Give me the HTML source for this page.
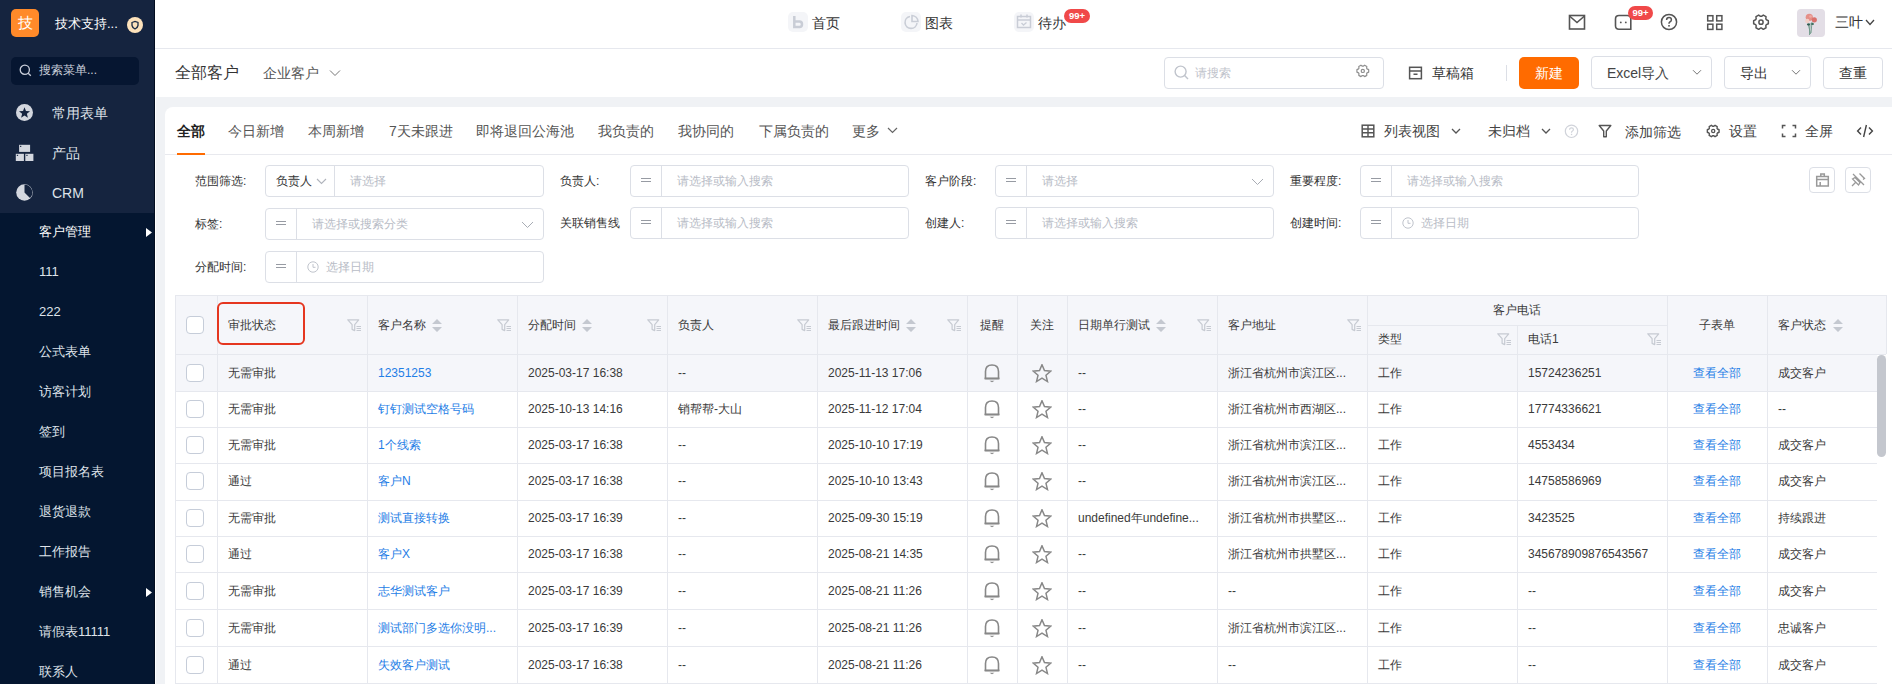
<!DOCTYPE html><html><head><meta charset="utf-8"><style>
*{box-sizing:border-box;margin:0;padding:0}
html,body{width:1892px;height:684px;overflow:hidden}
body{font-family:"Liberation Sans", sans-serif;background:#f0f2f5;position:relative;color:#333;-webkit-font-smoothing:antialiased}
.abs{position:absolute}
.t{position:absolute;white-space:nowrap;line-height:1}
#side{position:absolute;left:0;top:0;width:155px;height:684px;background:#15243f}
#sub{position:absolute;left:0;top:213px;width:155px;height:471px;background:#041630}
.mi{position:absolute;left:39px;font-size:13px;color:#dfe3ea;line-height:20px;white-space:nowrap}
.mt{font-size:14px}
#hdr{position:absolute;left:155px;top:0;width:1737px;height:49px;background:#fff;border-bottom:1px solid #e6e8ee}
#ttl{position:absolute;left:155px;top:49px;width:1737px;height:48px;background:#fff}
#card{position:absolute;left:165px;top:107px;width:1727px;height:577px;background:#fff;border-top-left-radius:8px}
.btn{position:absolute;top:57px;height:32px;border:1px solid #dcdfe6;border-radius:4px;background:#fff}
.ib{position:absolute;border:1px solid #dcdfe6;border-radius:4px;background:#fff}
.lbl{position:absolute;font-size:12px;color:#333;line-height:16px;white-space:nowrap}
.ph{position:absolute;font-size:12px;color:#b8bcc6;line-height:16px;white-space:nowrap}
.eq{position:absolute;width:10px;height:4px;border-top:1.2px solid #979ba3;border-bottom:1.2px solid #979ba3}
.cell{position:absolute;font-size:12px;color:#3a3a3a;line-height:16px;white-space:nowrap}
.lnk{color:#1f7ee6}
.vl{position:absolute;width:1px;background:#e6e8ee}
.hl{position:absolute;height:1px;background:#e6e8ee}
.cb{position:absolute;width:18px;height:18px;border:1px solid #c6cdd9;border-radius:4px;background:#fff}
</style></head><body><div id="side"></div><div id="sub"></div><div class="abs" style="left:154px;top:0;width:1px;height:684px;background:#020d20"></div><div class="abs" style="left:155px;top:0;width:1px;height:684px;background:#fff"></div><div class="abs" style="left:11px;top:9px;width:28px;height:28px;border-radius:5px;background:#ff8a2a;color:#fff;font-size:15px;line-height:28px;text-align:center">技</div><div class="t" style="left:55px;top:17px;font-size:13px;color:#fff;line-height:13px">技术支持...</div><div class="abs" style="left:127px;top:17px;width:16px;height:16px;border-radius:50%;background:#fde2bb"><svg width="16" height="16" viewBox="0 0 16 16" style="position:absolute;left:0;top:0"><path d="M5 5.5 L8 4.5 L11 5.5 L11 8.5 Q10.5 11 8 12 Q5.5 11 5 8.5 Z" fill="none" stroke="#1b2b44" stroke-width="1.3"/></svg></div><div class="abs" style="left:11px;top:57px;width:128px;height:28px;border-radius:5px;background:#061631"></div><svg class="abs" style="left:19px;top:64px" width="13" height="13" viewBox="0 0 13 13"><circle cx="5.8" cy="5.8" r="4.6" fill="none" stroke="#c9ceda" stroke-width="1.3"/><path d="M9.2 9.2 L11.8 11.8" stroke="#c9ceda" stroke-width="1.3"/></svg><div class="t" style="left:39px;top:64px;font-size:12px;color:#c9ceda;line-height:12px">搜索菜单...</div><svg class="abs" style="left:16px;top:104px" width="18" height="18" viewBox="0 0 18 18"><circle cx="8.5" cy="8.5" r="8.5" fill="#d3d7df"/><path d="M8.50 3.20 L9.97 6.98 L14.02 7.21 L10.88 9.77 L11.91 13.69 L8.50 11.50 L5.09 13.69 L6.12 9.77 L2.98 7.21 L7.03 6.98 Z" fill="#15243f"/></svg><div class="mi mt" style="left:52px;top:103px">常用表单</div><svg class="abs" style="left:15px;top:144px" width="20" height="18" viewBox="0 0 20 18"><rect x="4.1" y="0.8" width="11" height="7.1" fill="#d3d7df"/><rect x="0.8" y="9.8" width="8.1" height="7.2" fill="#d3d7df"/><rect x="10.3" y="9.8" width="8.1" height="7.2" fill="#d3d7df"/><rect x="5" y="1.8" width="1.3" height="1.1" fill="#15243f"/><rect x="1.8" y="10.8" width="1.3" height="1.1" fill="#15243f"/><rect x="11.3" y="10.8" width="1.3" height="1.1" fill="#15243f"/></svg><div class="mi mt" style="left:52px;top:143px">产品</div><svg class="abs" style="left:16px;top:184px" width="18" height="18" viewBox="0 0 18 18"><circle cx="8.5" cy="8.5" r="8.3" fill="#d3d7df"/><path d="M8.5 8.5 L8.5 0.8 A7.7 7.7 0 0 1 14 14 Z" fill="#15243f"/><path d="M8.5 1.5 L8.5 8.5 L13.4 13.4" fill="none" stroke="#d3d7df" stroke-width="0"/></svg><div class="mi mt" style="left:52px;top:183px">CRM</div><div class="mi" style="top:222px;font-weight:500;color:#fff">客户管理</div><svg class="abs" style="left:146px;top:228px" width="7" height="9" viewBox="0 0 7 9"><path d="M0 0 L6 4.5 L0 9 Z" fill="#fff"/></svg><div class="mi" style="top:262px;">111</div><div class="mi" style="top:302px;">222</div><div class="mi" style="top:342px;">公式表单</div><div class="mi" style="top:382px;">访客计划</div><div class="mi" style="top:422px;">签到</div><div class="mi" style="top:462px;">项目报名表</div><div class="mi" style="top:502px;">退货退款</div><div class="mi" style="top:542px;">工作报告</div><div class="mi" style="top:582px;">销售机会</div><svg class="abs" style="left:146px;top:588px" width="7" height="9" viewBox="0 0 7 9"><path d="M0 0 L6 4.5 L0 9 Z" fill="#fff"/></svg><div class="mi" style="top:622px;">请假表11111</div><div class="mi" style="top:662px;">联系人</div><div id="hdr"></div><div class="abs" style="left:788px;top:12px;width:20px;height:20px;border-radius:5px;background:#f4f5f8"></div><svg class="abs" style="left:788px;top:12px" width="20" height="20" viewBox="0 0 20 20"><path d="M6.3 4 L6.3 15 L11.5 15 Q14 15 14 12.25 Q14 9.5 11.5 9.5 L7 9.5" fill="none" stroke="#c9cdd6" stroke-width="2.5"/></svg><div class="t" style="left:812px;top:16px;font-size:14px;color:#333;line-height:14px">首页</div><div class="abs" style="left:901px;top:12px;width:20px;height:20px;border-radius:5px;background:#f4f5f8"></div><svg class="abs" style="left:901px;top:12px" width="20" height="20" viewBox="0 0 20 20"><path d="M9 4.5 A6 6 0 1 0 16 11" fill="none" stroke="#c9cdd6" stroke-width="1.6"/><path d="M11 3.5 L11 9.5 L17 9.5 A6.5 6.5 0 0 0 11 3.5 Z" fill="none" stroke="#c9cdd6" stroke-width="1.6"/></svg><div class="t" style="left:925px;top:16px;font-size:14px;color:#333;line-height:14px">图表</div><div class="abs" style="left:1014px;top:12px;width:20px;height:20px;border-radius:5px;background:#f4f5f8"></div><svg class="abs" style="left:1014px;top:12px" width="20" height="20" viewBox="0 0 20 20"><rect x="3.5" y="4.5" width="13" height="11" fill="none" stroke="#c9cdd6" stroke-width="1.5"/><path d="M3.5 8 L16.5 8 M7 2.5 L7 5.5 M13 2.5 L13 5.5" stroke="#c9cdd6" stroke-width="1.5"/><path d="M7.5 11 L9.5 13 L12.5 10.5" fill="none" stroke="#c9cdd6" stroke-width="1.3"/></svg><div class="t" style="left:1038px;top:16px;font-size:14px;color:#333;line-height:14px">待办</div><div class="abs" style="left:1064px;top:9px;width:26px;height:14px;border-radius:7px;background:#f04949;color:#fff;font-size:9.5px;line-height:14px;text-align:center;font-weight:bold">99+</div><svg class="abs" style="left:1568px;top:14px" width="18" height="17" viewBox="0 0 18 17"><rect x="1.5" y="1.5" width="15" height="13.5" fill="none" stroke="#555" stroke-width="1.6"/><path d="M1.5 2 L9 8.5 L16.5 2" fill="none" stroke="#555" stroke-width="1.6"/></svg><svg class="abs" style="left:1614px;top:14px" width="19" height="17" viewBox="0 0 19 17"><path d="M16.8 15.2 L5 15.2 Q1.5 15.2 1.5 11.7 L1.5 5 Q1.5 1.5 5 1.5 L13.3 1.5 Q16.8 1.5 16.8 5 Z" fill="none" stroke="#555" stroke-width="1.6"/><circle cx="6.8" cy="8.4" r="0.9" fill="#555"/><circle cx="11.8" cy="8.4" r="0.9" fill="#555"/></svg><div class="abs" style="left:1628px;top:6px;width:25px;height:14px;border-radius:7px;background:#f04949;color:#fff;font-size:9.5px;line-height:14px;text-align:center;font-weight:bold">99+</div><svg class="abs" style="left:1660px;top:13px" width="18" height="18" viewBox="0 0 18 18"><circle cx="9" cy="9" r="7.6" fill="none" stroke="#555" stroke-width="1.5"/><path d="M6.6 7 Q6.6 4.6 9 4.6 Q11.4 4.6 11.4 6.8 Q11.4 8.3 9.8 9 Q9 9.4 9 10.8" fill="none" stroke="#555" stroke-width="1.5"/><rect x="8.2" y="12" width="1.6" height="1.6" fill="#555"/></svg><svg class="abs" style="left:1706px;top:14px" width="18" height="17" viewBox="0 0 18 17"><rect x="1.7" y="1.7" width="5.2" height="5.2" fill="none" stroke="#555" stroke-width="1.5"/><rect x="10.7" y="1.7" width="5.2" height="5.2" fill="none" stroke="#555" stroke-width="1.5"/><rect x="1.7" y="10.2" width="5.2" height="5.2" fill="none" stroke="#555" stroke-width="1.5"/><rect x="10.7" y="10.2" width="5.2" height="5.2" fill="none" stroke="#555" stroke-width="1.5"/></svg><svg class="abs" style="left:1751px;top:12px" width="20" height="20" viewBox="0 0 20 20"><path d="M15.35 7.71 L17.34 8.64 L17.34 11.76 L15.35 12.69 L14.83 13.58 L15.02 15.77 L12.32 17.33 L10.51 16.08 L9.49 16.08 L7.68 17.33 L4.98 15.77 L5.17 13.58 L4.65 12.69 L2.66 11.76 L2.66 8.64 L4.65 7.71 L5.17 6.82 L4.98 4.63 L7.68 3.07 L9.49 4.32 L10.51 4.32 L12.32 3.07 L15.02 4.63 L14.83 6.82 Z" fill="none" stroke="#555" stroke-width="1.5" stroke-linejoin="round"/><circle cx="10" cy="10.2" r="2.1" fill="none" stroke="#555" stroke-width="1.5"/></svg><div class="abs" style="left:1797px;top:9px;width:28px;height:28px;border-radius:4px;background:#e3dee6"></div><svg class="abs" style="left:1797px;top:9px" width="28" height="28" viewBox="0 0 28 28"><path d="M13 14 L12.5 26 M15 13 L14 24 M11 14 L13.5 25" stroke="#6b9686" stroke-width="0.9" fill="none"/><ellipse cx="11.5" cy="15.5" rx="1.6" ry="1.1" fill="#2e5a50"/><ellipse cx="15.5" cy="15" rx="1.5" ry="1" fill="#3b6a5c"/><circle cx="12.3" cy="8.3" r="3.6" fill="#e58f88"/><circle cx="17.3" cy="10.8" r="2.6" fill="#d9706b"/><circle cx="10.3" cy="12" r="2.2" fill="#f2cfc8"/><circle cx="13.5" cy="7.5" r="1.3" fill="#f0aaa2"/></svg><div class="t" style="left:1835px;top:15px;font-size:14px;color:#333;line-height:14px">三叶</div><svg class="abs" style="left:1865px;top:19px" width="10" height="7" viewBox="0 0 10 7"><path d="M1 1 L5 5.5 L9 1" fill="none" stroke="#444" stroke-width="1.3"/></svg><div id="ttl"></div><div class="t" style="left:175px;top:65px;font-size:16px;color:#333;line-height:16px">全部客户</div><div class="t" style="left:263px;top:66px;font-size:14px;color:#555;line-height:14px">企业客户</div><svg class="abs" style="left:329px;top:69px" width="12" height="8" viewBox="0 0 12 8"><path d="M1 1.5 L6 6.5 L11 1.5" fill="none" stroke="#777" stroke-width="1"/></svg><div class="btn" style="left:1164px;width:220px"></div><svg class="abs" style="left:1174px;top:65px" width="16" height="16" viewBox="0 0 16 16"><circle cx="6.6" cy="6.6" r="5.5" fill="none" stroke="#c0c4cc" stroke-width="1.4"/><path d="M10.6 10.6 L14 14" stroke="#c0c4cc" stroke-width="1.4"/></svg><div class="t" style="left:1195px;top:67px;font-size:12px;color:#bfc3cb;line-height:12px">请搜索</div><svg class="abs" style="left:1355px;top:63px" width="16" height="16" viewBox="0 0 16 16"><path d="M12.06 5.91 L13.67 6.65 L13.67 9.15 L12.06 9.89 L11.65 10.60 L11.81 12.36 L9.65 13.61 L8.21 12.58 L7.39 12.58 L5.95 13.61 L3.79 12.36 L3.95 10.60 L3.54 9.89 L1.93 9.15 L1.93 6.65 L3.54 5.91 L3.95 5.20 L3.79 3.44 L5.95 2.19 L7.39 3.22 L8.21 3.22 L9.65 2.19 L11.81 3.44 L11.65 5.20 Z" fill="none" stroke="#8f8f8f" stroke-width="1.2" stroke-linejoin="round"/><circle cx="7.8" cy="7.9" r="1.6" fill="none" stroke="#8f8f8f" stroke-width="1.2"/></svg><svg class="abs" style="left:1408px;top:66px" width="15" height="14" viewBox="0 0 15 14"><rect x="1.6" y="1.3" width="11.8" height="11.4" fill="none" stroke="#555" stroke-width="1.5"/><path d="M1.6 5 L13.4 5 M5.5 8.3 L9.5 8.3" stroke="#555" stroke-width="1.5"/></svg><div class="t" style="left:1432px;top:66px;font-size:14px;color:#333;line-height:14px">草稿箱</div><div class="abs" style="left:1506px;top:65px;width:1px;height:16px;background:#dcdfe6"></div><div class="abs" style="left:1519px;top:57px;width:60px;height:32px;border-radius:5px;background:#ff6b00;color:#fff;font-size:14px;line-height:32px;text-align:center">新建</div><div class="btn" style="left:1591px;width:121px;top:56px;height:33px"></div><div class="t" style="left:1607px;top:66px;font-size:14px;color:#444;line-height:14px">Excel导入</div><svg class="abs" style="left:1692px;top:69px" width="10" height="7" viewBox="0 0 10 7"><path d="M1 1.2 L5 5.2 L9 1.2" fill="none" stroke="#777" stroke-width="1"/></svg><div class="btn" style="left:1724px;width:87px;top:56px;height:33px"></div><div class="t" style="left:1740px;top:66px;font-size:14px;color:#333;line-height:14px">导出</div><svg class="abs" style="left:1791px;top:69px" width="10" height="7" viewBox="0 0 10 7"><path d="M1 1.2 L5 5.2 L9 1.2" fill="none" stroke="#777" stroke-width="1"/></svg><div class="btn" style="left:1823px;width:60px"></div><div class="t" style="left:1839px;top:66px;font-size:14px;color:#333;line-height:14px">查重</div><div id="card"></div><div class="t" style="left:177px;top:124px;font-size:14px;line-height:14px;font-weight:bold;color:#222">全部</div><div class="t" style="left:228px;top:124px;font-size:14px;line-height:14px;color:#555">今日新增</div><div class="t" style="left:308px;top:124px;font-size:14px;line-height:14px;color:#555">本周新增</div><div class="t" style="left:389px;top:124px;font-size:14px;line-height:14px;color:#555">7天未跟进</div><div class="t" style="left:476px;top:124px;font-size:14px;line-height:14px;color:#555">即将退回公海池</div><div class="t" style="left:598px;top:124px;font-size:14px;line-height:14px;color:#555">我负责的</div><div class="t" style="left:678px;top:124px;font-size:14px;line-height:14px;color:#555">我协同的</div><div class="t" style="left:759px;top:124px;font-size:14px;line-height:14px;color:#555">下属负责的</div><div class="t" style="left:852px;top:124px;font-size:14px;line-height:14px;color:#555">更多</div><svg class="abs" style="left:887px;top:127px" width="11" height="7" viewBox="0 0 11 7"><path d="M1 1 L5.5 5.5 L10 1" fill="none" stroke="#666" stroke-width="1.2"/></svg><div class="hl" style="left:165px;top:154px;width:1727px;background:#e8e9ee"></div><div class="abs" style="left:177px;top:153px;width:28px;height:2px;background:#ff6b00"></div><svg class="abs" style="left:1361px;top:124px" width="14" height="14" viewBox="0 0 14 14"><rect x="1.2" y="1.2" width="11.6" height="11.6" fill="none" stroke="#555" stroke-width="1.5"/><path d="M1 5 L13 5 M1 8.8 L13 8.8 M7 1 L7 13" stroke="#555" stroke-width="1.4"/></svg><div class="t" style="left:1384px;top:124px;font-size:14px;color:#444;line-height:14px">列表视图</div><svg class="abs" style="left:1451px;top:128px" width="10" height="7" viewBox="0 0 10 7"><path d="M1 1 L5 5 L9 1" fill="none" stroke="#555" stroke-width="1.3"/></svg><div class="t" style="left:1488px;top:124px;font-size:14px;color:#444;line-height:14px">未归档</div><svg class="abs" style="left:1541px;top:128px" width="10" height="7" viewBox="0 0 10 7"><path d="M1 1 L5 5 L9 1" fill="none" stroke="#555" stroke-width="1.3"/></svg><svg class="abs" style="left:1564px;top:124px" width="15" height="15" viewBox="0 0 15 15"><circle cx="7.5" cy="7.3" r="6.2" fill="none" stroke="#d0d3da" stroke-width="1.2"/><path d="M5.6 5.8 Q5.6 3.9 7.5 3.9 Q9.4 3.9 9.4 5.6 Q9.4 6.8 8.2 7.3 Q7.5 7.7 7.5 8.8" fill="none" stroke="#d0d3da" stroke-width="1.2"/><rect x="6.9" y="9.8" width="1.3" height="1.3" fill="#d0d3da"/></svg><svg class="abs" style="left:1598px;top:124px" width="14" height="14" viewBox="0 0 14 14"><path d="M1.2 1.5 L12.8 1.5 L8.3 7 L8.3 12.8 L5.7 12.8 L5.7 7 Z" fill="none" stroke="#555" stroke-width="1.4" stroke-linejoin="round"/></svg><div class="t" style="left:1625px;top:125px;font-size:14px;color:#444;line-height:14px">添加筛选</div><svg class="abs" style="left:1705px;top:123px" width="16" height="16" viewBox="0 0 16 16"><path d="M12.46 6.01 L14.07 6.75 L14.07 9.25 L12.46 9.99 L12.05 10.70 L12.21 12.46 L10.05 13.71 L8.61 12.68 L7.79 12.68 L6.35 13.71 L4.19 12.46 L4.35 10.70 L3.94 9.99 L2.33 9.25 L2.33 6.75 L3.94 6.01 L4.35 5.30 L4.19 3.54 L6.35 2.29 L7.79 3.32 L8.61 3.32 L10.05 2.29 L12.21 3.54 L12.05 5.30 Z" fill="none" stroke="#555" stroke-width="1.4" stroke-linejoin="round"/><circle cx="8.2" cy="8" r="1.6" fill="none" stroke="#555" stroke-width="1.3"/></svg><div class="t" style="left:1729px;top:124px;font-size:14px;color:#444;line-height:14px">设置</div><svg class="abs" style="left:1781px;top:124px" width="16" height="14" viewBox="0 0 16 14"><path d="M1.5 4.5 L1.5 1.5 L4.5 1.5 M11.5 1.5 L14.5 1.5 L14.5 4.5 M14.5 9.5 L14.5 12.5 L11.5 12.5 M4.5 12.5 L1.5 12.5 L1.5 9.5" fill="none" stroke="#555" stroke-width="1.5"/></svg><div class="t" style="left:1805px;top:124px;font-size:14px;color:#444;line-height:14px">全屏</div><svg class="abs" style="left:1856px;top:124px" width="18" height="14" viewBox="0 0 18 14"><path d="M5 3.5 L1.6 7 L5 10.5 M13 3.5 L16.4 7 L13 10.5 M10.4 1 L7.6 13" fill="none" stroke="#444" stroke-width="1.4"/></svg><div class="lbl" style="left:195px;top:173px">范围筛选:</div><div class="ib" style="left:265px;top:165px;width:279px;height:32px"></div><div class="abs" style="left:334px;top:165px;width:1px;height:32px;background:#dcdfe6"></div><div class="lbl" style="left:276px;top:173px">负责人</div><svg class="abs" style="left:316px;top:178px" width="11" height="7" viewBox="0 0 11 7"><path d="M1 1 L5.5 5.5 L10 1" fill="none" stroke="#b0b4bc" stroke-width="1.1"/></svg><div class="ph" style="left:350px;top:173px">请选择</div><div class="lbl" style="left:560px;top:173px">负责人:</div><div class="ib" style="left:630px;top:165px;width:279px;height:32px"></div><div class="abs" style="left:661px;top:165px;width:1px;height:32px;background:#dcdfe6"></div><div class="eq" style="left:641px;top:178px"></div><div class="ph" style="left:677px;top:173px">请选择或输入搜索</div><div class="lbl" style="left:925px;top:173px">客户阶段:</div><div class="ib" style="left:995px;top:165px;width:279px;height:32px"></div><div class="abs" style="left:1026px;top:165px;width:1px;height:32px;background:#dcdfe6"></div><div class="eq" style="left:1006px;top:178px"></div><div class="ph" style="left:1042px;top:173px">请选择</div><svg class="abs" style="left:1251px;top:178px" width="13" height="8" viewBox="0 0 13 8"><path d="M1 1 L6.5 6.5 L12 1" fill="none" stroke="#a8acb4" stroke-width="1"/></svg><div class="lbl" style="left:1290px;top:173px">重要程度:</div><div class="ib" style="left:1360px;top:165px;width:279px;height:32px"></div><div class="abs" style="left:1391px;top:165px;width:1px;height:32px;background:#dcdfe6"></div><div class="eq" style="left:1371px;top:178px"></div><div class="ph" style="left:1407px;top:173px">请选择或输入搜索</div><div class="lbl" style="left:195px;top:216px">标签:</div><div class="ib" style="left:265px;top:208px;width:279px;height:32px"></div><div class="abs" style="left:296px;top:208px;width:1px;height:32px;background:#dcdfe6"></div><div class="eq" style="left:276px;top:221px"></div><div class="ph" style="left:312px;top:216px">请选择或搜索分类</div><svg class="abs" style="left:521px;top:221px" width="13" height="8" viewBox="0 0 13 8"><path d="M1 1 L6.5 6.5 L12 1" fill="none" stroke="#a8acb4" stroke-width="1"/></svg><div class="lbl" style="left:560px;top:215px">关联销售线</div><div class="ib" style="left:630px;top:207px;width:279px;height:32px"></div><div class="abs" style="left:661px;top:207px;width:1px;height:32px;background:#dcdfe6"></div><div class="eq" style="left:641px;top:220px"></div><div class="ph" style="left:677px;top:215px">请选择或输入搜索</div><div class="lbl" style="left:925px;top:215px">创建人:</div><div class="ib" style="left:995px;top:207px;width:279px;height:32px"></div><div class="abs" style="left:1026px;top:207px;width:1px;height:32px;background:#dcdfe6"></div><div class="eq" style="left:1006px;top:220px"></div><div class="ph" style="left:1042px;top:215px">请选择或输入搜索</div><div class="lbl" style="left:1290px;top:215px">创建时间:</div><div class="ib" style="left:1360px;top:207px;width:279px;height:32px"></div><div class="abs" style="left:1391px;top:207px;width:1px;height:32px;background:#dcdfe6"></div><div class="eq" style="left:1371px;top:220px"></div><svg class="abs" style="left:1402px;top:217px" width="12" height="12" viewBox="0 0 12 12"><circle cx="6" cy="6" r="5.2" fill="none" stroke="#c0c4cc" stroke-width="1"/><path d="M6 3 L6 6.3 L8.5 6.3" fill="none" stroke="#c0c4cc" stroke-width="1"/></svg><div class="ph" style="left:1421px;top:215px">选择日期</div><div class="lbl" style="left:195px;top:259px">分配时间:</div><div class="ib" style="left:265px;top:251px;width:279px;height:32px"></div><div class="abs" style="left:296px;top:251px;width:1px;height:32px;background:#dcdfe6"></div><div class="eq" style="left:276px;top:264px"></div><svg class="abs" style="left:307px;top:261px" width="12" height="12" viewBox="0 0 12 12"><circle cx="6" cy="6" r="5.2" fill="none" stroke="#c0c4cc" stroke-width="1"/><path d="M6 3 L6 6.3 L8.5 6.3" fill="none" stroke="#c0c4cc" stroke-width="1"/></svg><div class="ph" style="left:326px;top:259px">选择日期</div><div class="ib" style="left:1809px;top:167px;width:26px;height:26px"></div><svg class="abs" style="left:1809px;top:167px" width="26" height="26" viewBox="0 0 26 26"><path d="M11.8 9.6 L11.8 6.9 L15.3 6.9 L15.3 9.6 M7.7 9.6 L19.3 9.6 L19.3 18.9 L7.7 18.9 Z M7.7 12.6 L19.3 12.6 M11.2 15 L11.2 18.9" fill="none" stroke="#999" stroke-width="1.5"/></svg><div class="ib" style="left:1845px;top:167px;width:26px;height:26px"></div><svg class="abs" style="left:1845px;top:167px" width="26" height="26" viewBox="0 0 26 26"><path d="M8 7 L19 18 M14.5 6.5 L19.5 11.5 L18 12.5 M7.5 12 L10 10.5 L15 15.5 L13.5 18 Z M7 19 L10.5 15.5" fill="none" stroke="#999" stroke-width="1.3"/></svg><div class="abs" style="left:175px;top:295px;width:1711px;height:59px;background:#f5f6fa"></div><div class="abs" style="left:175px;top:354px;width:1702px;height:37px;background:#f5f6fa"></div><div class="hl" style="left:175px;top:295px;width:1711px"></div><div class="hl" style="left:1367px;top:325px;width:300px"></div><div class="hl" style="left:175px;top:354px;width:1711px"></div><div class="hl" style="left:175px;top:391px;width:1702px"></div><div class="hl" style="left:175px;top:427px;width:1702px"></div><div class="hl" style="left:175px;top:463px;width:1702px"></div><div class="hl" style="left:175px;top:500px;width:1702px"></div><div class="hl" style="left:175px;top:536px;width:1702px"></div><div class="hl" style="left:175px;top:572px;width:1702px"></div><div class="hl" style="left:175px;top:609px;width:1702px"></div><div class="hl" style="left:175px;top:646px;width:1702px"></div><div class="hl" style="left:175px;top:683px;width:1702px"></div><div class="vl" style="left:175px;top:295px;height:389px"></div><div class="vl" style="left:217px;top:295px;height:389px"></div><div class="vl" style="left:367px;top:295px;height:389px"></div><div class="vl" style="left:517px;top:295px;height:389px"></div><div class="vl" style="left:667px;top:295px;height:389px"></div><div class="vl" style="left:817px;top:295px;height:389px"></div><div class="vl" style="left:967px;top:295px;height:389px"></div><div class="vl" style="left:1017px;top:295px;height:389px"></div><div class="vl" style="left:1067px;top:295px;height:389px"></div><div class="vl" style="left:1217px;top:295px;height:389px"></div><div class="vl" style="left:1367px;top:295px;height:389px"></div><div class="vl" style="left:1517px;top:325px;height:359px"></div><div class="vl" style="left:1667px;top:295px;height:389px"></div><div class="vl" style="left:1767px;top:295px;height:389px"></div><div class="vl" style="left:1886px;top:295px;height:59px"></div><div class="cb" style="left:186px;top:316px"></div><div class="cell" style="left:228px;top:317px">审批状态</div><svg class="abs" style="left:347px;top:319px" width="15" height="13" viewBox="0 0 15 13"><path d="M0.8 0.8 L11.7 0.8 L7.7 5.6 L7.7 11.6 L5.1 10.4 L5.1 5.6 Z" fill="none" stroke="#c6cad2" stroke-width="1.2" stroke-linejoin="round"/><path d="M9.5 7.5 L14 7.5 M9.5 9.5 L14 9.5 M9.5 11.5 L14 11.5" stroke="#c6cad2" stroke-width="1"/></svg><div class="cell" style="left:378px;top:317px">客户名称</div><svg class="abs" style="left:432px;top:319px" width="10" height="13" viewBox="0 0 10 13"><path d="M5 0 L10 5 L0 5 Z M0 8 L10 8 L5 13 Z" fill="#c4c8d0"/></svg><svg class="abs" style="left:497px;top:319px" width="15" height="13" viewBox="0 0 15 13"><path d="M0.8 0.8 L11.7 0.8 L7.7 5.6 L7.7 11.6 L5.1 10.4 L5.1 5.6 Z" fill="none" stroke="#c6cad2" stroke-width="1.2" stroke-linejoin="round"/><path d="M9.5 7.5 L14 7.5 M9.5 9.5 L14 9.5 M9.5 11.5 L14 11.5" stroke="#c6cad2" stroke-width="1"/></svg><div class="cell" style="left:528px;top:317px">分配时间</div><svg class="abs" style="left:582px;top:319px" width="10" height="13" viewBox="0 0 10 13"><path d="M5 0 L10 5 L0 5 Z M0 8 L10 8 L5 13 Z" fill="#c4c8d0"/></svg><svg class="abs" style="left:647px;top:319px" width="15" height="13" viewBox="0 0 15 13"><path d="M0.8 0.8 L11.7 0.8 L7.7 5.6 L7.7 11.6 L5.1 10.4 L5.1 5.6 Z" fill="none" stroke="#c6cad2" stroke-width="1.2" stroke-linejoin="round"/><path d="M9.5 7.5 L14 7.5 M9.5 9.5 L14 9.5 M9.5 11.5 L14 11.5" stroke="#c6cad2" stroke-width="1"/></svg><div class="cell" style="left:678px;top:317px">负责人</div><svg class="abs" style="left:797px;top:319px" width="15" height="13" viewBox="0 0 15 13"><path d="M0.8 0.8 L11.7 0.8 L7.7 5.6 L7.7 11.6 L5.1 10.4 L5.1 5.6 Z" fill="none" stroke="#c6cad2" stroke-width="1.2" stroke-linejoin="round"/><path d="M9.5 7.5 L14 7.5 M9.5 9.5 L14 9.5 M9.5 11.5 L14 11.5" stroke="#c6cad2" stroke-width="1"/></svg><div class="cell" style="left:828px;top:317px">最后跟进时间</div><svg class="abs" style="left:906px;top:319px" width="10" height="13" viewBox="0 0 10 13"><path d="M5 0 L10 5 L0 5 Z M0 8 L10 8 L5 13 Z" fill="#c4c8d0"/></svg><svg class="abs" style="left:947px;top:319px" width="15" height="13" viewBox="0 0 15 13"><path d="M0.8 0.8 L11.7 0.8 L7.7 5.6 L7.7 11.6 L5.1 10.4 L5.1 5.6 Z" fill="none" stroke="#c6cad2" stroke-width="1.2" stroke-linejoin="round"/><path d="M9.5 7.5 L14 7.5 M9.5 9.5 L14 9.5 M9.5 11.5 L14 11.5" stroke="#c6cad2" stroke-width="1"/></svg><div class="cell" style="left:1078px;top:317px">日期单行测试</div><svg class="abs" style="left:1156px;top:319px" width="10" height="13" viewBox="0 0 10 13"><path d="M5 0 L10 5 L0 5 Z M0 8 L10 8 L5 13 Z" fill="#c4c8d0"/></svg><svg class="abs" style="left:1197px;top:319px" width="15" height="13" viewBox="0 0 15 13"><path d="M0.8 0.8 L11.7 0.8 L7.7 5.6 L7.7 11.6 L5.1 10.4 L5.1 5.6 Z" fill="none" stroke="#c6cad2" stroke-width="1.2" stroke-linejoin="round"/><path d="M9.5 7.5 L14 7.5 M9.5 9.5 L14 9.5 M9.5 11.5 L14 11.5" stroke="#c6cad2" stroke-width="1"/></svg><div class="cell" style="left:1228px;top:317px">客户地址</div><svg class="abs" style="left:1347px;top:319px" width="15" height="13" viewBox="0 0 15 13"><path d="M0.8 0.8 L11.7 0.8 L7.7 5.6 L7.7 11.6 L5.1 10.4 L5.1 5.6 Z" fill="none" stroke="#c6cad2" stroke-width="1.2" stroke-linejoin="round"/><path d="M9.5 7.5 L14 7.5 M9.5 9.5 L14 9.5 M9.5 11.5 L14 11.5" stroke="#c6cad2" stroke-width="1"/></svg><div class="cell" style="left:980px;top:317px">提醒</div><div class="cell" style="left:1030px;top:317px">关注</div><div class="cell" style="left:1493px;top:302px">客户电话</div><div class="cell" style="left:1378px;top:331px">类型</div><svg class="abs" style="left:1497px;top:333px" width="15" height="13" viewBox="0 0 15 13"><path d="M0.8 0.8 L11.7 0.8 L7.7 5.6 L7.7 11.6 L5.1 10.4 L5.1 5.6 Z" fill="none" stroke="#c6cad2" stroke-width="1.2" stroke-linejoin="round"/><path d="M9.5 7.5 L14 7.5 M9.5 9.5 L14 9.5 M9.5 11.5 L14 11.5" stroke="#c6cad2" stroke-width="1"/></svg><div class="cell" style="left:1528px;top:331px">电话1</div><svg class="abs" style="left:1647px;top:333px" width="15" height="13" viewBox="0 0 15 13"><path d="M0.8 0.8 L11.7 0.8 L7.7 5.6 L7.7 11.6 L5.1 10.4 L5.1 5.6 Z" fill="none" stroke="#c6cad2" stroke-width="1.2" stroke-linejoin="round"/><path d="M9.5 7.5 L14 7.5 M9.5 9.5 L14 9.5 M9.5 11.5 L14 11.5" stroke="#c6cad2" stroke-width="1"/></svg><div class="cell" style="left:1699px;top:317px">子表单</div><div class="cell" style="left:1778px;top:317px">客户状态</div><svg class="abs" style="left:1833px;top:319px" width="10" height="13" viewBox="0 0 10 13"><path d="M5 0 L10 5 L0 5 Z M0 8 L10 8 L5 13 Z" fill="#c4c8d0"/></svg><div class="abs" style="left:217px;top:302px;width:88px;height:43px;border:2px solid #e5361f;border-radius:6px"></div><div class="cb" style="left:186px;top:364px"></div><div class="cell " style="left:228px;top:365px">无需审批</div><div class="cell lnk" style="left:378px;top:365px">12351253</div><div class="cell " style="left:528px;top:365px">2025-03-17 16:38</div><div class="cell " style="left:678px;top:365px">--</div><div class="cell " style="left:828px;top:365px">2025-11-13 17:06</div><div class="cell " style="left:1078px;top:365px">--</div><div class="cell " style="left:1228px;top:365px">浙江省杭州市滨江区...</div><div class="cell " style="left:1378px;top:365px">工作</div><div class="cell " style="left:1528px;top:365px">15724236251</div><div class="cell lnk" style="left:1693px;top:365px">查看全部</div><div class="cell " style="left:1778px;top:365px">成交客户</div><svg class="abs" style="left:984px;top:364px" width="16" height="19" viewBox="0 0 16 19"><path d="M1.5 14.5 L1.5 7.5 Q1.5 1 8 1 Q14.5 1 14.5 7.5 L14.5 14.5 Z" fill="none" stroke="#888" stroke-width="1.6" stroke-linejoin="round"/><path d="M0.5 14.5 L15.5 14.5" stroke="#888" stroke-width="1.8"/><path d="M5.5 16.8 L10.5 16.8 L8 18.2 Z" fill="#888"/></svg><svg class="abs" style="left:1032px;top:364px" width="20" height="19" viewBox="0 0 20 19"><path d="M10.00 0.70 L12.47 6.60 L18.84 7.13 L13.99 11.30 L15.47 17.52 L10.00 14.20 L4.53 17.52 L6.01 11.30 L1.16 7.13 L7.53 6.60 Z" fill="none" stroke="#888" stroke-width="1.5" stroke-linejoin="miter"/></svg><div class="cb" style="left:186px;top:400px"></div><div class="cell " style="left:228px;top:401px">无需审批</div><div class="cell lnk" style="left:378px;top:401px">钉钉测试空格号码</div><div class="cell " style="left:528px;top:401px">2025-10-13 14:16</div><div class="cell " style="left:678px;top:401px">销帮帮-大山</div><div class="cell " style="left:828px;top:401px">2025-11-12 17:04</div><div class="cell " style="left:1078px;top:401px">--</div><div class="cell " style="left:1228px;top:401px">浙江省杭州市西湖区...</div><div class="cell " style="left:1378px;top:401px">工作</div><div class="cell " style="left:1528px;top:401px">17774336621</div><div class="cell lnk" style="left:1693px;top:401px">查看全部</div><div class="cell " style="left:1778px;top:401px">--</div><svg class="abs" style="left:984px;top:400px" width="16" height="19" viewBox="0 0 16 19"><path d="M1.5 14.5 L1.5 7.5 Q1.5 1 8 1 Q14.5 1 14.5 7.5 L14.5 14.5 Z" fill="none" stroke="#888" stroke-width="1.6" stroke-linejoin="round"/><path d="M0.5 14.5 L15.5 14.5" stroke="#888" stroke-width="1.8"/><path d="M5.5 16.8 L10.5 16.8 L8 18.2 Z" fill="#888"/></svg><svg class="abs" style="left:1032px;top:400px" width="20" height="19" viewBox="0 0 20 19"><path d="M10.00 0.70 L12.47 6.60 L18.84 7.13 L13.99 11.30 L15.47 17.52 L10.00 14.20 L4.53 17.52 L6.01 11.30 L1.16 7.13 L7.53 6.60 Z" fill="none" stroke="#888" stroke-width="1.5" stroke-linejoin="miter"/></svg><div class="cb" style="left:186px;top:436px"></div><div class="cell " style="left:228px;top:437px">无需审批</div><div class="cell lnk" style="left:378px;top:437px">1个线索</div><div class="cell " style="left:528px;top:437px">2025-03-17 16:38</div><div class="cell " style="left:678px;top:437px">--</div><div class="cell " style="left:828px;top:437px">2025-10-10 17:19</div><div class="cell " style="left:1078px;top:437px">--</div><div class="cell " style="left:1228px;top:437px">浙江省杭州市滨江区...</div><div class="cell " style="left:1378px;top:437px">工作</div><div class="cell " style="left:1528px;top:437px">4553434</div><div class="cell lnk" style="left:1693px;top:437px">查看全部</div><div class="cell " style="left:1778px;top:437px">成交客户</div><svg class="abs" style="left:984px;top:436px" width="16" height="19" viewBox="0 0 16 19"><path d="M1.5 14.5 L1.5 7.5 Q1.5 1 8 1 Q14.5 1 14.5 7.5 L14.5 14.5 Z" fill="none" stroke="#888" stroke-width="1.6" stroke-linejoin="round"/><path d="M0.5 14.5 L15.5 14.5" stroke="#888" stroke-width="1.8"/><path d="M5.5 16.8 L10.5 16.8 L8 18.2 Z" fill="#888"/></svg><svg class="abs" style="left:1032px;top:436px" width="20" height="19" viewBox="0 0 20 19"><path d="M10.00 0.70 L12.47 6.60 L18.84 7.13 L13.99 11.30 L15.47 17.52 L10.00 14.20 L4.53 17.52 L6.01 11.30 L1.16 7.13 L7.53 6.60 Z" fill="none" stroke="#888" stroke-width="1.5" stroke-linejoin="miter"/></svg><div class="cb" style="left:186px;top:472px"></div><div class="cell " style="left:228px;top:473px">通过</div><div class="cell lnk" style="left:378px;top:473px">客户N</div><div class="cell " style="left:528px;top:473px">2025-03-17 16:38</div><div class="cell " style="left:678px;top:473px">--</div><div class="cell " style="left:828px;top:473px">2025-10-10 13:43</div><div class="cell " style="left:1078px;top:473px">--</div><div class="cell " style="left:1228px;top:473px">浙江省杭州市滨江区...</div><div class="cell " style="left:1378px;top:473px">工作</div><div class="cell " style="left:1528px;top:473px">14758586969</div><div class="cell lnk" style="left:1693px;top:473px">查看全部</div><div class="cell " style="left:1778px;top:473px">成交客户</div><svg class="abs" style="left:984px;top:472px" width="16" height="19" viewBox="0 0 16 19"><path d="M1.5 14.5 L1.5 7.5 Q1.5 1 8 1 Q14.5 1 14.5 7.5 L14.5 14.5 Z" fill="none" stroke="#888" stroke-width="1.6" stroke-linejoin="round"/><path d="M0.5 14.5 L15.5 14.5" stroke="#888" stroke-width="1.8"/><path d="M5.5 16.8 L10.5 16.8 L8 18.2 Z" fill="#888"/></svg><svg class="abs" style="left:1032px;top:472px" width="20" height="19" viewBox="0 0 20 19"><path d="M10.00 0.70 L12.47 6.60 L18.84 7.13 L13.99 11.30 L15.47 17.52 L10.00 14.20 L4.53 17.52 L6.01 11.30 L1.16 7.13 L7.53 6.60 Z" fill="none" stroke="#888" stroke-width="1.5" stroke-linejoin="miter"/></svg><div class="cb" style="left:186px;top:509px"></div><div class="cell " style="left:228px;top:510px">无需审批</div><div class="cell lnk" style="left:378px;top:510px">测试直接转换</div><div class="cell " style="left:528px;top:510px">2025-03-17 16:39</div><div class="cell " style="left:678px;top:510px">--</div><div class="cell " style="left:828px;top:510px">2025-09-30 15:19</div><div class="cell " style="left:1078px;top:510px">undefined年undefine...</div><div class="cell " style="left:1228px;top:510px">浙江省杭州市拱墅区...</div><div class="cell " style="left:1378px;top:510px">工作</div><div class="cell " style="left:1528px;top:510px">3423525</div><div class="cell lnk" style="left:1693px;top:510px">查看全部</div><div class="cell " style="left:1778px;top:510px">持续跟进</div><svg class="abs" style="left:984px;top:509px" width="16" height="19" viewBox="0 0 16 19"><path d="M1.5 14.5 L1.5 7.5 Q1.5 1 8 1 Q14.5 1 14.5 7.5 L14.5 14.5 Z" fill="none" stroke="#888" stroke-width="1.6" stroke-linejoin="round"/><path d="M0.5 14.5 L15.5 14.5" stroke="#888" stroke-width="1.8"/><path d="M5.5 16.8 L10.5 16.8 L8 18.2 Z" fill="#888"/></svg><svg class="abs" style="left:1032px;top:509px" width="20" height="19" viewBox="0 0 20 19"><path d="M10.00 0.70 L12.47 6.60 L18.84 7.13 L13.99 11.30 L15.47 17.52 L10.00 14.20 L4.53 17.52 L6.01 11.30 L1.16 7.13 L7.53 6.60 Z" fill="none" stroke="#888" stroke-width="1.5" stroke-linejoin="miter"/></svg><div class="cb" style="left:186px;top:545px"></div><div class="cell " style="left:228px;top:546px">通过</div><div class="cell lnk" style="left:378px;top:546px">客户X</div><div class="cell " style="left:528px;top:546px">2025-03-17 16:38</div><div class="cell " style="left:678px;top:546px">--</div><div class="cell " style="left:828px;top:546px">2025-08-21 14:35</div><div class="cell " style="left:1078px;top:546px">--</div><div class="cell " style="left:1228px;top:546px">浙江省杭州市拱墅区...</div><div class="cell " style="left:1378px;top:546px">工作</div><div class="cell " style="left:1528px;top:546px">345678909876543567</div><div class="cell lnk" style="left:1693px;top:546px">查看全部</div><div class="cell " style="left:1778px;top:546px">成交客户</div><svg class="abs" style="left:984px;top:545px" width="16" height="19" viewBox="0 0 16 19"><path d="M1.5 14.5 L1.5 7.5 Q1.5 1 8 1 Q14.5 1 14.5 7.5 L14.5 14.5 Z" fill="none" stroke="#888" stroke-width="1.6" stroke-linejoin="round"/><path d="M0.5 14.5 L15.5 14.5" stroke="#888" stroke-width="1.8"/><path d="M5.5 16.8 L10.5 16.8 L8 18.2 Z" fill="#888"/></svg><svg class="abs" style="left:1032px;top:545px" width="20" height="19" viewBox="0 0 20 19"><path d="M10.00 0.70 L12.47 6.60 L18.84 7.13 L13.99 11.30 L15.47 17.52 L10.00 14.20 L4.53 17.52 L6.01 11.30 L1.16 7.13 L7.53 6.60 Z" fill="none" stroke="#888" stroke-width="1.5" stroke-linejoin="miter"/></svg><div class="cb" style="left:186px;top:582px"></div><div class="cell " style="left:228px;top:583px">无需审批</div><div class="cell lnk" style="left:378px;top:583px">志华测试客户</div><div class="cell " style="left:528px;top:583px">2025-03-17 16:39</div><div class="cell " style="left:678px;top:583px">--</div><div class="cell " style="left:828px;top:583px">2025-08-21 11:26</div><div class="cell " style="left:1078px;top:583px">--</div><div class="cell " style="left:1228px;top:583px">--</div><div class="cell " style="left:1378px;top:583px">工作</div><div class="cell " style="left:1528px;top:583px">--</div><div class="cell lnk" style="left:1693px;top:583px">查看全部</div><div class="cell " style="left:1778px;top:583px">成交客户</div><svg class="abs" style="left:984px;top:582px" width="16" height="19" viewBox="0 0 16 19"><path d="M1.5 14.5 L1.5 7.5 Q1.5 1 8 1 Q14.5 1 14.5 7.5 L14.5 14.5 Z" fill="none" stroke="#888" stroke-width="1.6" stroke-linejoin="round"/><path d="M0.5 14.5 L15.5 14.5" stroke="#888" stroke-width="1.8"/><path d="M5.5 16.8 L10.5 16.8 L8 18.2 Z" fill="#888"/></svg><svg class="abs" style="left:1032px;top:582px" width="20" height="19" viewBox="0 0 20 19"><path d="M10.00 0.70 L12.47 6.60 L18.84 7.13 L13.99 11.30 L15.47 17.52 L10.00 14.20 L4.53 17.52 L6.01 11.30 L1.16 7.13 L7.53 6.60 Z" fill="none" stroke="#888" stroke-width="1.5" stroke-linejoin="miter"/></svg><div class="cb" style="left:186px;top:619px"></div><div class="cell " style="left:228px;top:620px">无需审批</div><div class="cell lnk" style="left:378px;top:620px">测试部门多选你没明...</div><div class="cell " style="left:528px;top:620px">2025-03-17 16:39</div><div class="cell " style="left:678px;top:620px">--</div><div class="cell " style="left:828px;top:620px">2025-08-21 11:26</div><div class="cell " style="left:1078px;top:620px">--</div><div class="cell " style="left:1228px;top:620px">浙江省杭州市滨江区...</div><div class="cell " style="left:1378px;top:620px">工作</div><div class="cell " style="left:1528px;top:620px">--</div><div class="cell lnk" style="left:1693px;top:620px">查看全部</div><div class="cell " style="left:1778px;top:620px">忠诚客户</div><svg class="abs" style="left:984px;top:619px" width="16" height="19" viewBox="0 0 16 19"><path d="M1.5 14.5 L1.5 7.5 Q1.5 1 8 1 Q14.5 1 14.5 7.5 L14.5 14.5 Z" fill="none" stroke="#888" stroke-width="1.6" stroke-linejoin="round"/><path d="M0.5 14.5 L15.5 14.5" stroke="#888" stroke-width="1.8"/><path d="M5.5 16.8 L10.5 16.8 L8 18.2 Z" fill="#888"/></svg><svg class="abs" style="left:1032px;top:619px" width="20" height="19" viewBox="0 0 20 19"><path d="M10.00 0.70 L12.47 6.60 L18.84 7.13 L13.99 11.30 L15.47 17.52 L10.00 14.20 L4.53 17.52 L6.01 11.30 L1.16 7.13 L7.53 6.60 Z" fill="none" stroke="#888" stroke-width="1.5" stroke-linejoin="miter"/></svg><div class="cb" style="left:186px;top:656px"></div><div class="cell " style="left:228px;top:657px">通过</div><div class="cell lnk" style="left:378px;top:657px">失效客户测试</div><div class="cell " style="left:528px;top:657px">2025-03-17 16:38</div><div class="cell " style="left:678px;top:657px">--</div><div class="cell " style="left:828px;top:657px">2025-08-21 11:26</div><div class="cell " style="left:1078px;top:657px">--</div><div class="cell " style="left:1228px;top:657px">--</div><div class="cell " style="left:1378px;top:657px">工作</div><div class="cell " style="left:1528px;top:657px">--</div><div class="cell lnk" style="left:1693px;top:657px">查看全部</div><div class="cell " style="left:1778px;top:657px">成交客户</div><svg class="abs" style="left:984px;top:656px" width="16" height="19" viewBox="0 0 16 19"><path d="M1.5 14.5 L1.5 7.5 Q1.5 1 8 1 Q14.5 1 14.5 7.5 L14.5 14.5 Z" fill="none" stroke="#888" stroke-width="1.6" stroke-linejoin="round"/><path d="M0.5 14.5 L15.5 14.5" stroke="#888" stroke-width="1.8"/><path d="M5.5 16.8 L10.5 16.8 L8 18.2 Z" fill="#888"/></svg><svg class="abs" style="left:1032px;top:656px" width="20" height="19" viewBox="0 0 20 19"><path d="M10.00 0.70 L12.47 6.60 L18.84 7.13 L13.99 11.30 L15.47 17.52 L10.00 14.20 L4.53 17.52 L6.01 11.30 L1.16 7.13 L7.53 6.60 Z" fill="none" stroke="#888" stroke-width="1.5" stroke-linejoin="miter"/></svg><div class="abs" style="left:1877px;top:355px;width:9px;height:102px;border-radius:5px;background:#c4c7ce"></div></body></html>
